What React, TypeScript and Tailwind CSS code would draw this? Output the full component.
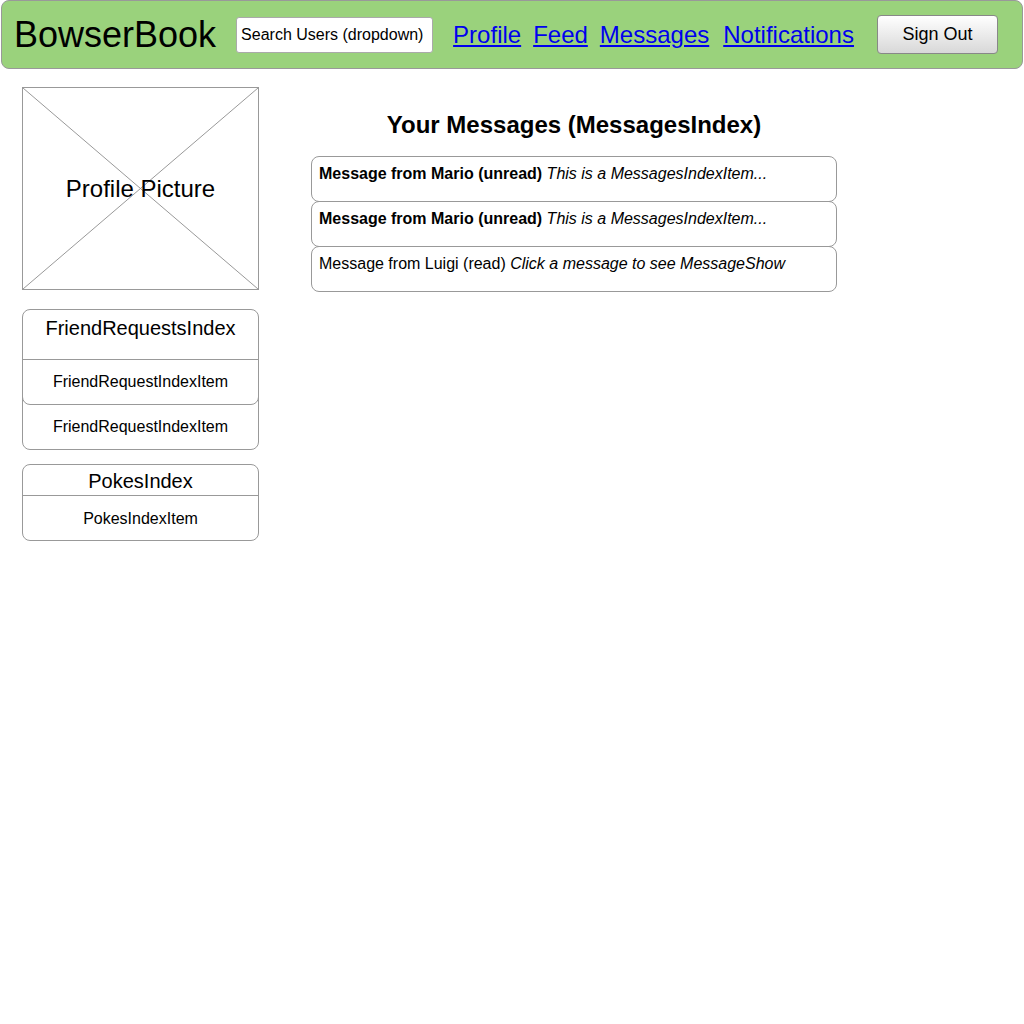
import React from "react";

const font = { fontFamily: '"Liberation Sans", Arial, sans-serif' };

function Msg({ bold, rest, isBold }: { bold: string; rest: string; isBold: boolean }) {
  return (
    <div className="h-[46px] -mt-px first:mt-0 rounded-lg border border-[#999] px-[7px] pt-[8px] text-[16px] leading-[18px] text-black">
      <span className={isBold ? "font-bold" : ""}>{bold}</span> <span className="italic">{rest}</span>
    </div>
  );
}

export default function App() {
  return (
    <div className="min-h-[1024px] w-[1024px] bg-white text-black" style={font}>
      <header className="mx-px flex h-[69px] items-center rounded-lg border border-[#999] bg-[#9ad27c] pl-[12px]">
        <div className="text-[36px] leading-none">BowserBook</div>
        <div className="ml-[20px] flex h-[36px] w-[197px] items-center rounded-[3px] border border-[#aaa] bg-white pl-[4px] text-[16px]">
          Search Users (dropdown)
        </div>
        <nav className="ml-[20px] flex items-center text-[24px] leading-none text-[#0000ee]">
          <a href="#" className="underline">Profile</a>
          <a href="#" className="ml-[12px] underline">Feed</a>
          <a href="#" className="ml-[12px] underline">Messages</a>
          <a href="#" className="ml-[14px] underline">Notifications</a>
        </nav>
        <button className="ml-[23px] h-[39px] w-[121px] rounded-[4px] border border-[#888] bg-gradient-to-b from-white to-[#d8d8d8] text-[18px] text-black">
          Sign Out
        </button>
      </header>

      <div className="flex pl-[22px] pt-[18px]">
        <aside className="flex w-[237px] flex-col">
          <div className="relative flex h-[203px] items-center justify-center border border-[#999]">
            <svg className="absolute inset-0 h-full w-full" preserveAspectRatio="none" viewBox="0 0 100 100">
              <line x1="0" y1="0" x2="100" y2="100" stroke="#999" strokeWidth="1" vectorEffect="non-scaling-stroke" />
              <line x1="100" y1="0" x2="0" y2="100" stroke="#999" strokeWidth="1" vectorEffect="non-scaling-stroke" />
            </svg>
            <span className="relative text-[24px]">Profile Picture</span>
          </div>

          <div className="mt-[19px] rounded-lg border border-[#999]">
            <div className="flex h-[49px] justify-center pt-[6px] text-[20px] leading-[24px]">FriendRequestsIndex</div>
            <div className="-mx-px flex h-[46px] items-center justify-center rounded-b-lg border border-[#999] text-[16px]">
              FriendRequestIndexItem
            </div>
            <div className="flex h-[44px] items-center justify-center text-[16px]">FriendRequestIndexItem</div>
          </div>

          <div className="mt-[14px] rounded-lg border border-[#999]">
            <div className="flex h-[31px] items-center justify-center border-b border-[#999] pt-[2px] text-[20px]">PokesIndex</div>
            <div className="flex h-[44px] items-center justify-center pt-[2px] text-[16px]">PokesIndexItem</div>
          </div>
        </aside>

        <main className="ml-[52px] flex w-[526px] flex-col">
          <h1 className="mt-[24px] text-center text-[24px] font-bold leading-[28px]">Your Messages (MessagesIndex)</h1>
          <div className="mt-[17px] flex flex-col">
            <Msg bold="Message from Mario (unread)" rest="This is a MessagesIndexItem..." isBold />
            <Msg bold="Message from Mario (unread)" rest="This is a MessagesIndexItem..." isBold />
            <Msg bold="Message from Luigi (read)" rest="Click a message to see MessageShow" isBold={false} />
          </div>
        </main>
      </div>
    </div>
  );
}
